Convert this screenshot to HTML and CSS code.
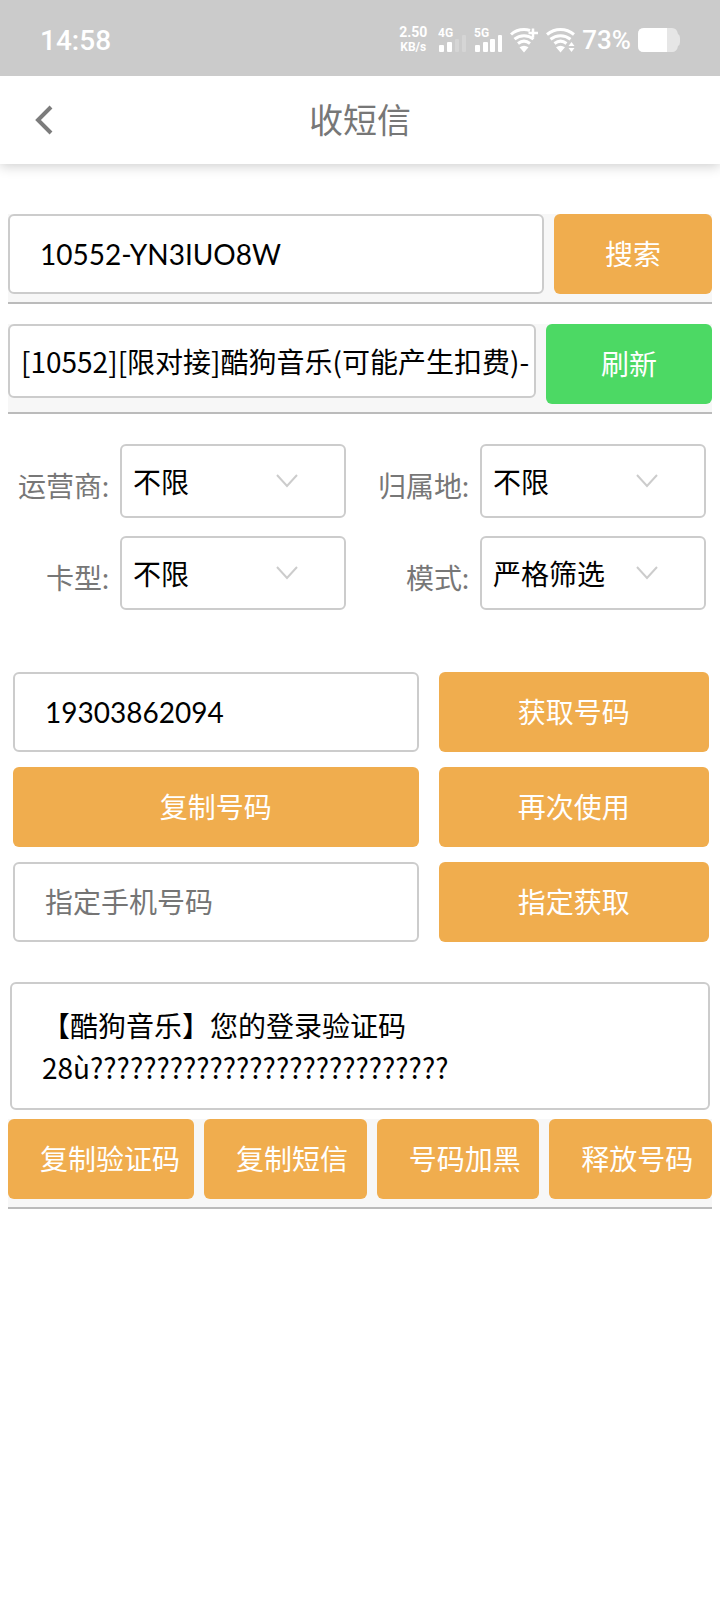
FILE: index.html
```html
<!DOCTYPE html>
<html lang="zh-CN">
<head>
    <meta charset="UTF-8">
    <meta name="viewport" content="width=device-width, initial-scale=1.0">
    <title>收短信</title>
    <link rel="stylesheet" href="styles.css">
</head>
<body>
    <div class="status-bar">
        <span class="clock">14:58</span>
        <div class="status-icons">
            <div class="net-speed"><span>2.50</span><span class="unit">KB/s</span></div>
            <svg class="signal" width="29" height="34" viewBox="0 -4 29 34" fill="#fff">
                <text x="0" y="10">4G</text>
                <rect x="1" y="18" width="5" height="7" rx="1"/>
                <rect x="9" y="15" width="5" height="10" rx="1"/>
                <rect x="17" y="12" width="4" height="13" rx="1" opacity=".2"/>
                <rect x="24" y="8" width="4" height="17" rx="1" opacity=".2"/>
            </svg>
            <svg class="signal" width="29" height="34" viewBox="0 -4 29 34" fill="#fff">
                <text x="0" y="10">5G</text>
                <rect x="1" y="18" width="5" height="7" rx="1"/>
                <rect x="9" y="15" width="5" height="10" rx="1"/>
                <rect x="16" y="12" width="5" height="13" rx="1"/>
                <rect x="24" y="8" width="4" height="17" rx="1"/>
            </svg>
            <svg width="29" height="26" viewBox="0 0 29 26" fill="none" stroke="#fff" stroke-width="3">
                <path d="M1 7.5C5 3.8 9 2.5 14 2.5c2.600 0 4 .3 6 1M4.500 12.200C10 7.500 18 7.500 23.500 12.200M8 16.500c4-3.200 8-3.200 12 0"/>
                <path d="M23 1.500v9M18.500 6H28" stroke-width="2.500"/>
                <path d="M9.500 20.200c3-2 6-2 9 0L14 25.500z" fill="#fff" stroke="none"/>
            </svg>
            <svg width="29" height="26" viewBox="0 0 29 26" fill="none" stroke="#fff" stroke-width="3">
                <path d="M1 7.500C9 .8 20 .8 28 7.500M4.500 12.200C10.500 7.500 18.500 7.500 24.500 12.200M8.500 16.500c4-3.200 8-3.200 12 0"/>
                <path d="M10 20.200c3-2 6-2 9 0L14.500 25.500zM25.500 15l3 4h-6zM25.500 25l3-4h-6z" fill="#fff" stroke="none"/>
            </svg>
            <span class="battery-level">73%</span>
            <svg width="42" height="24" viewBox="0 0 42 24">
                <path d="M6 0H34q5 0 6 6 2 1 2 4v4q0 3-2 4-1 6-6 6H6q-6 0-6-6V6q0-6 6-6z" fill="#e6e6e6"/>
                <path d="M6 0H29V24H6q-6 0-6-6V6q0-6 6-6z" fill="#fff"/>
            </svg>
        </div>
    </div>

    <header class="header">
        <a class="back" href="#" aria-label="返回">
            <svg width="18" height="30" viewBox="0 0 18 30" fill="none" stroke="#7c7c7c" stroke-width="4">
                <path d="M16 2L3 15l13 13"/>
            </svg>
        </a>
        <h1>收短信</h1>
    </header>

    <main>
        <div class="bar search-bar">
            <input type="text" class="field" value="10552-YN3IUO8W" aria-label="项目编号">
            <button class="btn">搜索</button>
        </div>

        <div class="bar project-bar">
            <select class="select" aria-label="项目">
                <option>[10552][限对接]酷狗音乐(可能产生扣费)-</option>
            </select>
            <button class="btn btn-green">刷新</button>
        </div>

        <div class="filters">
            <div class="filter">
                <label for="carrier">运营商:</label>
                <div class="select-wrap">
                    <select class="select" id="carrier"><option>不限</option></select>
                    <svg class="arrow" viewBox="0 0 22 14"><path d="M1 1l10 11L21 1"/></svg>
                </div>
            </div>
            <div class="filter">
                <label for="region">归属地:</label>
                <div class="select-wrap">
                    <select class="select" id="region"><option>不限</option></select>
                    <svg class="arrow" viewBox="0 0 22 14"><path d="M1 1l10 11L21 1"/></svg>
                </div>
            </div>
            <div class="filter">
                <label for="card">卡型:</label>
                <div class="select-wrap">
                    <select class="select" id="card"><option>不限</option></select>
                    <svg class="arrow" viewBox="0 0 22 14"><path d="M1 1l10 11L21 1"/></svg>
                </div>
            </div>
            <div class="filter">
                <label for="mode">模式:</label>
                <div class="select-wrap">
                    <select class="select" id="mode"><option>严格筛选</option></select>
                    <svg class="arrow" viewBox="0 0 22 14"><path d="M1 1l10 11L21 1"/></svg>
                </div>
            </div>
        </div>

        <div class="phone">
            <input type="text" class="field" value="19303862094" aria-label="号码">
            <button class="btn">获取号码</button>
            <button class="btn">复制号码</button>
            <button class="btn">再次使用</button>
            <input type="text" class="field" placeholder="指定手机号码" aria-label="指定手机号码">
            <button class="btn">指定获取</button>
        </div>

        <textarea class="message" rows="2" aria-label="短信内容">【酷狗音乐】您的登录验证码
28ù???????????????????????????</textarea>

        <div class="bar actions">
            <button class="btn">复制验证码</button>
            <button class="btn">复制短信</button>
            <button class="btn">号码加黑</button>
            <button class="btn">释放号码</button>
        </div>
    </main>
</body>
</html>
```

FILE: styles.css
```css
* {
    margin: 0;
    padding: 0;
    box-sizing: border-box;
}

body {
    background: #fff;
    color: #000;
    font-family: Lato, "Noto Sans CJK SC", sans-serif;
    font-size: 28px;
}

input, select, textarea, button {
    font: inherit;
    color: inherit;
}

/* 状态栏 */
.status-bar {
    display: flex;
    justify-content: space-between;
    align-items: center;
    height: 76px;
    padding: 4px 40px 0;
    background: #cbcbcb;
    color: #fff;
    font-family: Roboto, sans-serif;
    font-weight: 500;
}

.status-icons {
    display: flex;
    align-items: center;
    gap: 7px;
}

.net-speed {
    display: flex;
    flex-direction: column;
    align-items: center;
    margin-right: 4px;
    font-size: 14px;
    font-weight: 700;
    line-height: 15px;
}

.net-speed .unit {
    font-size: 12px;
}

.signal text {
    font-size: 12px;
    font-weight: 700;
}

.battery-level {
    font-size: 26px;
}

/* 标题栏 */
.header {
    display: grid;
    grid-template-columns: 60px 1fr 60px;
    align-items: center;
    height: 88px;
    box-shadow: 0 2px 12px rgba(0, 0, 0, 0.2);
    clip-path: inset(0 0 -16px 0);
}

.header h1 {
    padding-bottom: 3px;
    color: #777;
    font-size: 34px;
    font-weight: 400;
    text-align: center;
}

.back {
    display: flex;
    padding-left: 35px;
}

main {
    padding: 50px 8px;
}

.field,
.select,
.message {
    width: 100%;
    min-width: 0;
    border: 2px solid #ccc;
    border-radius: 6px;
    background: #fff;
    outline: none;
}

.field {
    height: 80px;
    padding: 0 30px;
}

.field::placeholder {
    color: #757575;
}

.select {
    height: 74px;
    padding-left: 11px;
    appearance: none;
    font-family: "Noto Sans CJK SC", sans-serif;
}

.btn {
    height: 80px;
    padding-bottom: 3px;
    border: none;
    border-radius: 6px;
    background: #f0ad4e;
    color: #fff;
    white-space: nowrap;
    cursor: pointer;
}

.btn-green {
    background: #4cd964;
}

.bar {
    display: flex;
    align-items: flex-start;
    gap: 10px;
    padding-bottom: 8px;
    border-bottom: 2px solid #bbb;
    background: #f7f7f7;
}

.search-bar {
    margin-bottom: 20px;
}

.search-bar .btn {
    padding-left: 51px;
    padding-right: 51px;
}

.project-bar .btn {
    padding-left: 55px;
    padding-right: 55px;
}

/* 筛选条件 */
.filters {
    display: grid;
    grid-template-columns: 1fr 1fr;
    row-gap: 18px;
    margin: 30px -8px 62px;
}

.filter {
    display: flex;
    align-items: center;
    padding-right: 14px;
}

.filter label {
    flex: 0 0 120px;
    padding: 8px 11px 0 0;
    color: #777;
    text-align: right;
}

.select-wrap {
    flex: 1;
    position: relative;
}

.arrow {
    position: absolute;
    top: 30px;
    right: 48px;
    width: 22px;
    height: 14px;
    fill: none;
    stroke: #ccc;
    stroke-width: 2;
    pointer-events: none;
}

/* 号码操作 */
.phone {
    display: grid;
    grid-template-columns: 3fr 2fr;
    gap: 15px 20px;
    margin: 0 3px 40px 5px;
}

.message {
    display: block;
    width: calc(100% - 4px);
    height: 128px;
    margin: 0 2px 9px;
    padding: 20px 30px;
    font-family: "Noto Sans CJK SC", sans-serif;
    line-height: 42px;
    resize: none;
}

.actions .btn {
    flex: 1 1 auto;
    padding-left: 32px;
    padding-right: 14px;
    text-align: left;
}

.actions .btn:first-child {
    flex-grow: 0;
}
```
